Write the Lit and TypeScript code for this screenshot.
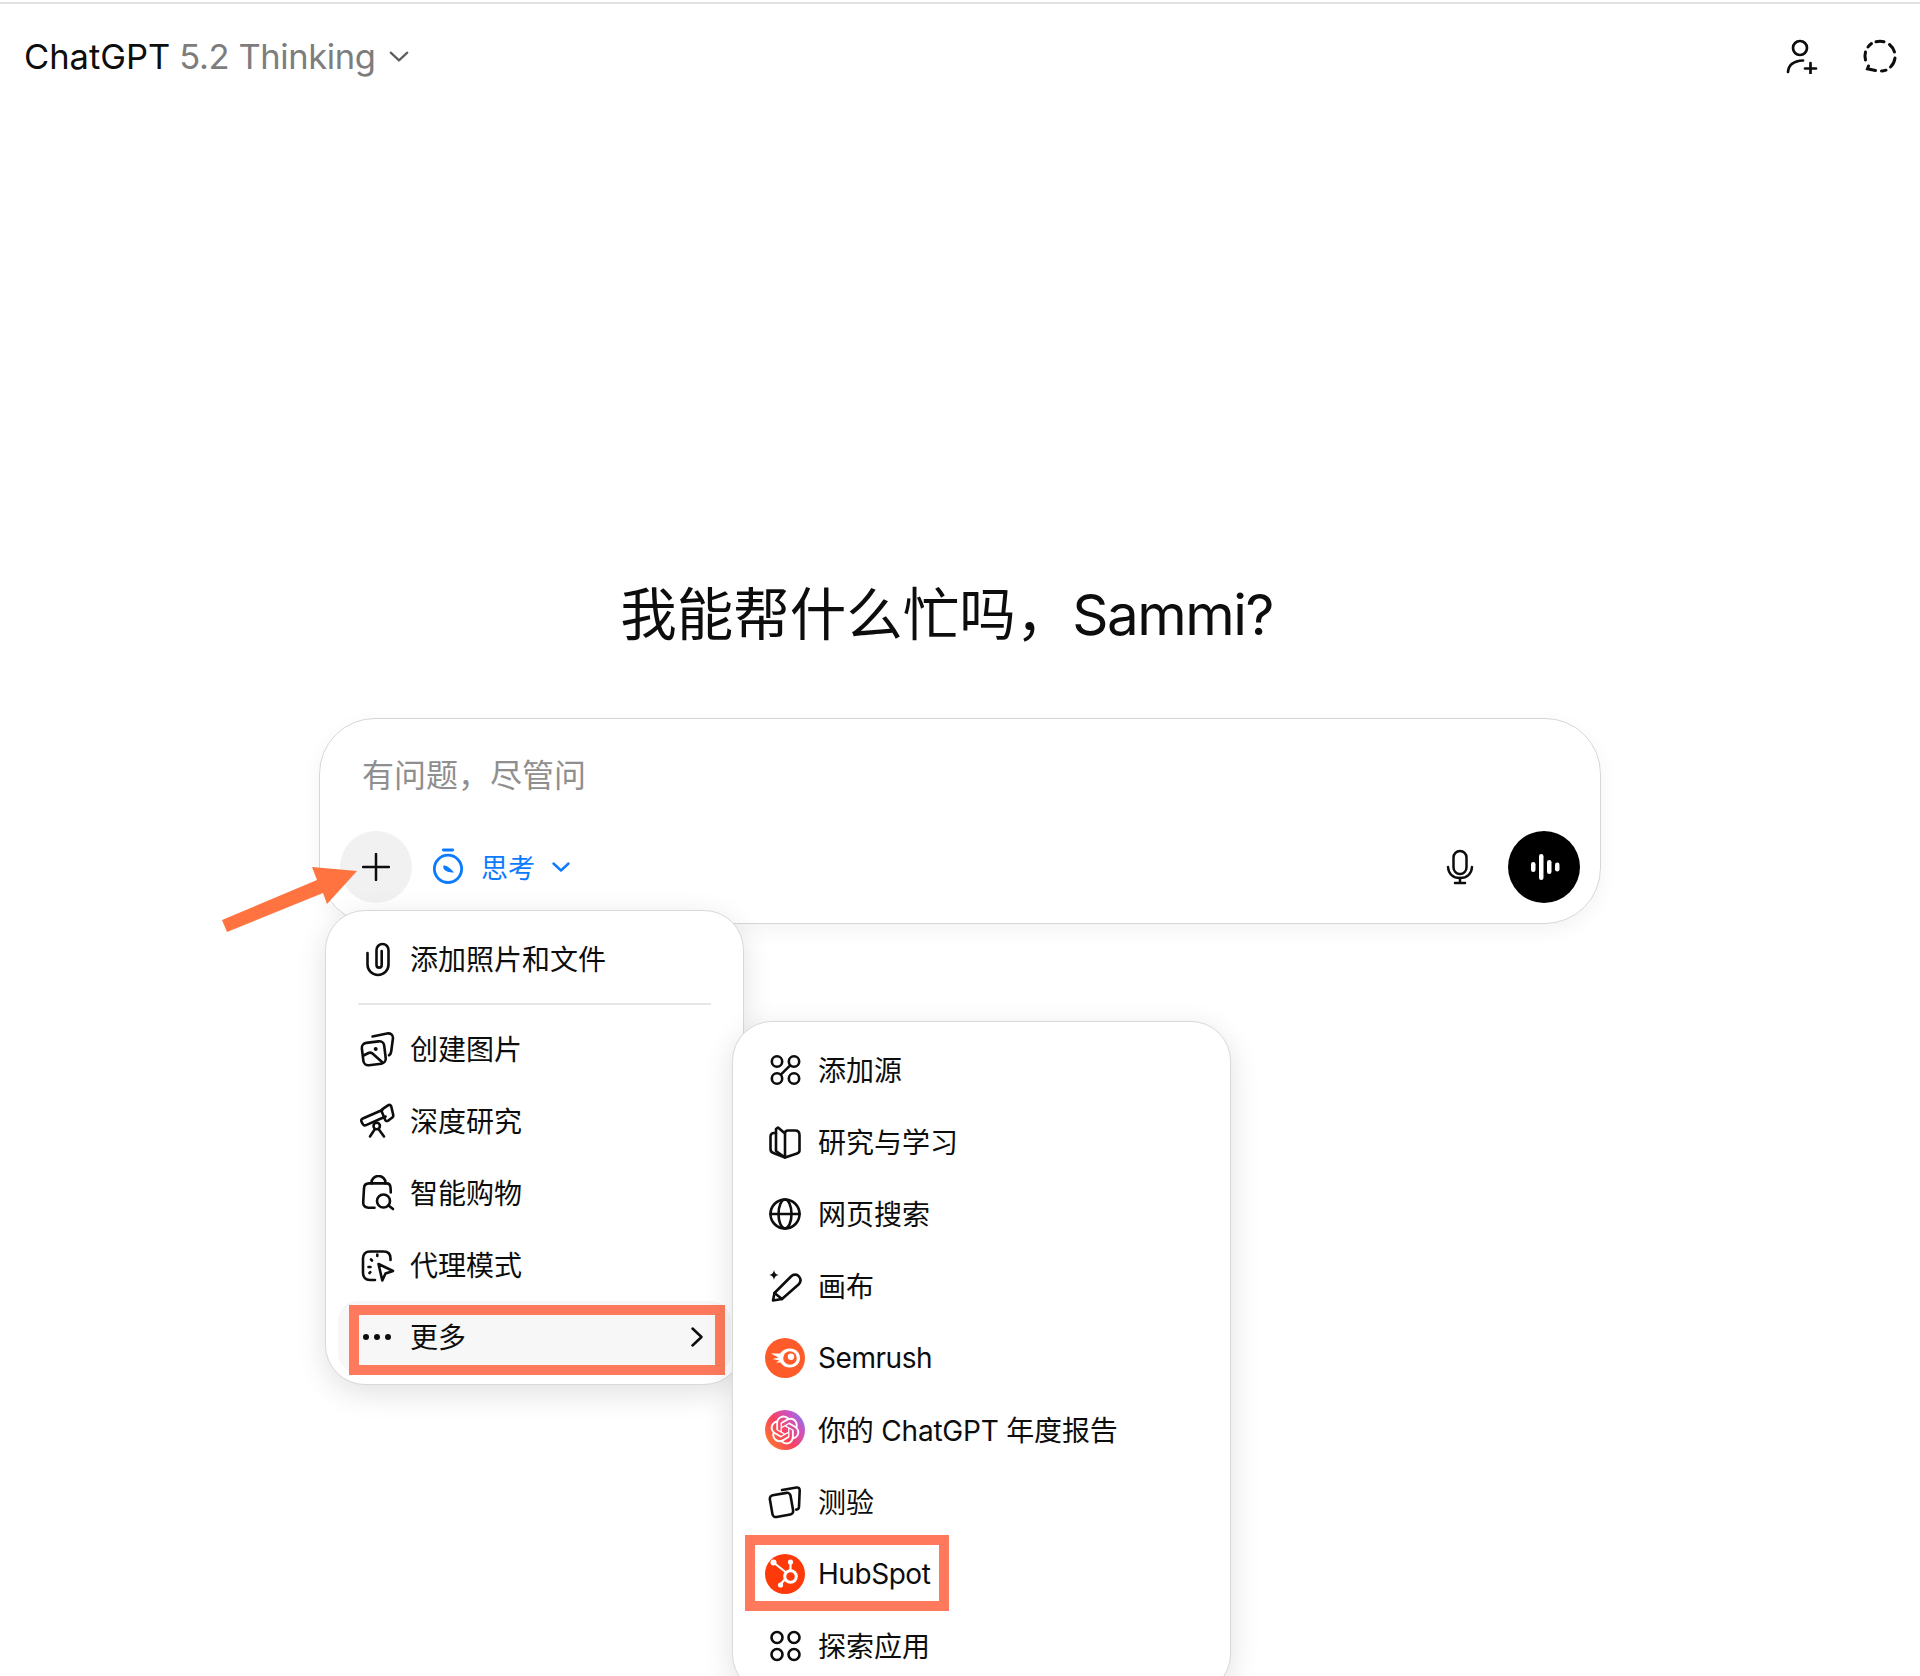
import { LitElement, css, html, svg } from "lit";
import { customElement } from "lit/decorators.js";

const line = (content: unknown, w = 2.6) => html`<svg
  class="icon"
  viewBox="0 0 36 36"
  fill="none"
  stroke="currentColor"
  stroke-width=${w}
  stroke-linecap="round"
  stroke-linejoin="round"
>
  ${content}
</svg>`;

const icons = {
  clip: line(svg`<path d="M8.500 12v11.500a10.500 10.500 0 0 0 21 0V9a6 6 0 0 0-12 0v15a2.600 2.600 0 0 0 5.200 0V10"/>`),
  image: line(svg`
    <path d="M13.500 5.500L28 2.500c3.500-.6 6 1.200 6 4.500l-1.800 13.500c-.3 2-1 3.200-2.200 3.700"/>
    <rect x="3.500" y="11" width="22.500" height="22.500" rx="5" transform="rotate(-7 15 22)"/>
    <circle cx="16.700" cy="18" r="2" fill="currentColor" stroke="none"/>
    <path d="M4.500 24.500l5-2.500c1.500-.7 2.700-.5 4 .6l9.500 8.400"/>
  `),
  telescope: line(svg`
    <path d="M23.300 7L3.800 15.500c-1.500.7-2 2-1.200 3.400l1 1.900c.7 1.500 2 2 3.500 1.300l19.500-8.600"/>
    <path d="M23.800 5.800L29 2.300c1.500-.9 2.600-.4 3.200 1l2 8.500c.3 1.400 0 2.300-1.200 3l-4 2.900c-1.300.7-2.300.3-2.900-1l-3.300-8c-.5-1.200-.2-2.100 1-2.900z"/>
    <circle cx="17.700" cy="23" r="3.200"/>
    <path d="M15.800 26.300L11 33.500M19.700 26.300L25 33.500"/>
  `),
  bag: line(svg`
    <path d="M12.500 8.500V7.500a6.500 6 0 0 1 14 0v1"/>
    <path d="M15.500 32.700H9.500c-3.300 0-5.500-2-5.300-5.300l.8-14c.1-3 2-5 5-5h17.500c2.500 0 3.800 1.500 4 4l.3 5"/>
    <circle cx="24.500" cy="26" r="6.500"/>
    <path d="M29.500 30.500l4.500 3.500"/>
  `),
  agent: line(svg`
    <path d="M16 33H11c-4.500 0-7-2.500-7-7V11.500c0-4.500 2.500-7 7-7h13.500c4.500 0 7 2.500 7 7V13"/>
    <path d="M19.500 17l14.500 7-7.500 2.500-3.200 7z"/>
    <path d="M18.300 7.500v1.500M12 12.500l1 1M9.500 20h2M10.500 26l.8-.8"/>
  `),
  dots: html`<svg class="icon" viewBox="0 0 36 36" fill="currentColor">
    <circle cx="7" cy="18" r="3" /><circle cx="18" cy="18" r="3" /><circle cx="29" cy="18" r="3" />
  </svg>`,
  sources: line(svg`
    <circle cx="10" cy="9.500" r="5.200"/><circle cx="27" cy="9.500" r="5.200"/>
    <circle cx="10" cy="26.500" r="5.200"/><circle cx="27" cy="26.500" r="5.200"/>
    <path d="M13.800 22.700L23.200 13.300"/>
  `),
  book: line(svg`
    <path d="M18 9.500L11 3.500 9 5v22l9 6.500 12-4c1.500-.5 2.500-1.500 2.500-3V11c0-3-1.500-4.500-4.500-4.500L21 6.500c-2 0-3 1.200-3 3v24"/>
    <path d="M9 9H7c-2 0-3.500 1.500-3.500 3.500V25c0 2 1 3.500 3 4l11.500 4.500"/>
  `),
  globe: line(svg`
    <circle cx="18" cy="18" r="14.500"/>
    <ellipse cx="18" cy="18" rx="6.500" ry="14.500"/>
    <path d="M3.500 18h29"/>
  `),
  pen: line(svg`
    <path d="M6 32.500l1.500-7.500L24 8.500c2.500-2.500 6-2.500 8 0s2 5.500-.5 8L15 31z"/>
    <path d="M7.500 25l7.500 6"/>
    <path d="M7 2c.7 3.300 1.700 4.300 5 5-3.300.7-4.300 1.700-5 5-.7-3.300-1.700-4.300-5-5 3.300-.7 4.300-1.700 5-5z" fill="currentColor" stroke="none"/>
  `),
  quiz: line(svg`
    <path d="M15 6l14.500-2.500c2-.3 3.200.8 3.200 2.800l-.7 16.500c-.1 1.800-1 2.800-2.800 2.800"/>
    <rect x="4" y="10" width="21" height="22" rx="3.500" transform="rotate(-10 14 21)"/>
  `),
  apps: line(svg`
    <circle cx="10" cy="9.500" r="5.500"/><circle cx="27" cy="9.500" r="5.500"/>
    <circle cx="10" cy="26.500" r="5.500"/><circle cx="27" cy="26.500" r="5.500"/>
  `),
  semrush: html`<svg class="logo" viewBox="0 0 40 40">
    <circle cx="20" cy="20" r="20" fill="#ff5a2a" />
    <path
      fill="#fff"
      d="M6 15.500h9C17.500 12 21 10.500 25 10.500c5.800 0 10 4 10 9.500s-4.200 9.500-10 9.500c-4.500 0-7.500-2-9.500-5H11l3.500-2-7-1.500 6-1.500z"
    />
    <circle cx="25" cy="20" r="6.800" fill="#ff5a2a" />
    <circle cx="26" cy="18.700" r="3.200" fill="#fff" />
  </svg>`,
  report: html`<svg class="logo" viewBox="0 0 40 40">
    <defs>
      <linearGradient id="rg" x1="0" y1="1" x2="1" y2="0.25">
        <stop offset="0" stop-color="#ff8a1e" />
        <stop offset="0.5" stop-color="#f8415f" />
        <stop offset="0.85" stop-color="#c855c8" />
        <stop offset="1" stop-color="#7a7bf0" />
      </linearGradient>
    </defs>
    <circle cx="20" cy="20" r="20" fill="url(#rg)" />
    <g transform="translate(5.600 5.600) scale(1.2)">
      <path
        fill="#fff"
        d="M22.2819 9.8211a5.9847 5.9847 0 0 0-.5157-4.9108 6.0462 6.0462 0 0 0-6.5098-2.9A6.0651 6.0651 0 0 0 4.9807 4.1818a5.9847 5.9847 0 0 0-3.9977 2.9 6.0462 6.0462 0 0 0 .7427 7.0966 5.98 5.98 0 0 0 .511 4.9107 6.051 6.051 0 0 0 6.5146 2.9001A5.9847 5.9847 0 0 0 13.2599 24a6.0557 6.0557 0 0 0 5.7718-4.2058 5.9894 5.9894 0 0 0 3.9977-2.9001 6.0557 6.0557 0 0 0-.7475-7.0729zm-9.022 12.6081a4.4755 4.4755 0 0 1-2.8764-1.0408l.1419-.0804 4.7783-2.7582a.7948.7948 0 0 0 .3927-.6813v-6.7369l2.02 1.1686a.071.071 0 0 1 .038.052v5.5826a4.504 4.504 0 0 1-4.4945 4.4944zm-9.6607-4.1254a4.4708 4.4708 0 0 1-.5346-3.0137l.142.0852 4.783 2.7582a.7712.7712 0 0 0 .7806 0l5.8428-3.3685v2.3324a.0804.0804 0 0 1-.0332.0615L9.74 19.9502a4.4992 4.4992 0 0 1-6.1408-1.6464zM2.3408 7.8956a4.485 4.485 0 0 1 2.3655-1.9728V11.6a.7664.7664 0 0 0 .3879.6765l5.8144 3.3543-2.0201 1.1685a.0757.0757 0 0 1-.071 0l-4.8303-2.7865A4.504 4.504 0 0 1 2.3408 7.872zm16.5963 3.8558L13.1038 8.364 15.1192 7.2a.0757.0757 0 0 1 .071 0l4.8303 2.7913a4.4944 4.4944 0 0 1-.6765 8.1042v-5.6772a.79.79 0 0 0-.407-.667zm2.0107-3.0231l-.142-.0852-4.7735-2.7818a.7759.7759 0 0 0-.7854 0L9.409 9.2297V6.8974a.0662.0662 0 0 1 .0284-.0615l4.8303-2.7866a4.4992 4.4992 0 0 1 6.6802 4.66zM8.3065 12.863l-2.02-1.1638a.0804.0804 0 0 1-.038-.0567V6.0742a4.4992 4.4992 0 0 1 7.3757-3.4537l-.142.0805L8.704 5.459a.7948.7948 0 0 0-.3927.6813zm1.0976-2.3654l2.602-1.4998 2.6069 1.4998v2.9994l-2.5974 1.4997-2.6067-1.4997Z"
      />
    </g>
  </svg>`,
  hubspot: html`<svg class="logo" viewBox="0 0 40 40">
    <circle cx="20" cy="20" r="20" fill="#ff3a0a" />
    <g stroke="#fff" stroke-width="2.200" fill="none" stroke-linecap="round">
      <path d="M8.500 8.500l12 9.500M25.500 9v8M20.500 24.500l-5 6" />
      <circle cx="25.500" cy="22.500" r="5.800" stroke-width="3" />
    </g>
    <circle cx="8.500" cy="8.500" r="3" fill="#fff" />
    <circle cx="25.500" cy="8" r="2.600" fill="#fff" />
    <circle cx="15.500" cy="31" r="2.600" fill="#fff" />
  </svg>`,
};

type Row = { icon: unknown; label: string; text?: string; mark?: boolean };

const sideItems: Row[] = [
  { icon: icons.sources, label: "添加源" },
  { icon: icons.book, label: "研究与学习" },
  { icon: icons.globe, label: "网页搜索" },
  { icon: icons.pen, label: "画布" },
  { icon: icons.semrush, label: "Semrush", text: "latin" },
  { icon: icons.report, label: "你的 ChatGPT 年度报告", text: "cjk mixed" },
  { icon: icons.quiz, label: "测验" },
  { icon: icons.hubspot, label: "HubSpot", text: "latin", mark: true },
  { icon: icons.apps, label: "探索应用" },
];

@customElement("app-root")
export class AppRoot extends LitElement {
  row(item: Row) {
    return html`<div class="row">
      ${item.icon}<span class=${item.text ?? "cjk"}>${item.label}</span>
      ${item.mark ? html`<div class="mark mark-hub"></div>` : null}
    </div>`;
  }

  render() {
    return html`
      <header>
        <div class="title">
          ChatGPT <span class="muted">5.2 Thinking</span>
          <svg class="chev" viewBox="0 0 18 10" fill="none" stroke="currentColor" stroke-width="2" stroke-linecap="round" stroke-linejoin="round">
            <path d="M1.500 1.500L9 8.500l7.500-7" />
          </svg>
        </div>
        <div class="top-actions">
          <svg class="top-icon" viewBox="0 0 36 36" fill="none" stroke="currentColor" stroke-width="2.700" stroke-linecap="round">
            <circle cx="16" cy="10" r="7" />
            <path d="M4 34c.5-7 5-11 15-11.500" />
            <path d="M26.500 25v11M21 30.500h11" />
          </svg>
          <svg class="top-icon" viewBox="0 0 36 36" fill="none" stroke="currentColor" stroke-width="3" stroke-linecap="round">
            <path d="M14 3.800A15 15 0 0 1 22 3.800" />
            <path d="M27.500 6.500A15 15 0 0 1 32.500 14" />
            <path d="M33 20A15 15 0 0 1 28.500 29" />
            <path d="M24 32.200A15 15 0 0 1 19.500 33" />
            <path d="M13.500 32.500L5.500 30.800 6.500 28" />
            <path d="M3.500 22A15 15 0 0 1 3.500 14" />
            <path d="M6 9A15 15 0 0 1 9.500 5.500" />
          </svg>
        </div>
      </header>

      <main>
        <h1>我能帮什么忙吗，<span class="name">Sammi?</span></h1>
        <div class="composer">
          <div class="placeholder">有问题，尽管问</div>
          <div class="toolbar">
            <div class="plus">
              <svg viewBox="0 0 28 28" fill="none" stroke="currentColor" stroke-width="2.500" stroke-linecap="round">
                <path d="M14 1v26M1 14h26" />
              </svg>
            </div>
            <div class="mode">
              <svg class="timer" viewBox="0 0 34 38" fill="none" stroke="currentColor" stroke-width="3" stroke-linecap="round">
                <path d="M12 2h10" />
                <circle cx="17" cy="22" r="14.500" />
                <path d="M12 18.500c3-1 8 3 11.500 7.500-5.500 0-10.500-2-11.500-5z" fill="currentColor" stroke="none" />
              </svg>
              <span class="cjk">思考</span>
              <svg class="chev" viewBox="0 0 18 10" fill="none" stroke="currentColor" stroke-width="2.400" stroke-linecap="round" stroke-linejoin="round">
                <path d="M1.500 1.500L9 8.500l7.500-7" />
              </svg>
            </div>
            <div class="spacer"></div>
            <svg class="mic" viewBox="0 0 36 36" fill="none" stroke="currentColor" stroke-width="2.500" stroke-linecap="round">
              <rect x="11.500" y="2" width="13" height="23" rx="6.500" />
              <path d="M6 18c.5 7 5 11 12 11s11.500-4 12-11" />
              <path d="M18 29v4M13 34h10" />
            </svg>
            <div class="voice">
              <svg viewBox="0 0 32 32" fill="#fff">
                <rect x="3" y="11" width="4.500" height="10" rx="2.250" />
                <rect x="11" y="3" width="4.500" height="26" rx="2.250" />
                <rect x="19" y="9" width="4.500" height="14" rx="2.250" />
                <rect x="27" y="11.500" width="4.500" height="9" rx="2.250" />
              </svg>
            </div>
          </div>

          <div class="menu menu-main">
            ${this.row({ icon: icons.clip, label: "添加照片和文件" })}
            <div class="divider"></div>
            ${this.row({ icon: icons.image, label: "创建图片" })}
            ${this.row({ icon: icons.telescope, label: "深度研究" })}
            ${this.row({ icon: icons.bag, label: "智能购物" })}
            ${this.row({ icon: icons.agent, label: "代理模式" })}
            <div class="row active">
              ${icons.dots}<span class="cjk">更多</span>
              <svg class="next" viewBox="0 0 12 20" fill="none" stroke="currentColor" stroke-width="2.500" stroke-linecap="round" stroke-linejoin="round">
                <path d="M1.500 1.500L10.500 10l-9 8.500" />
              </svg>
              <div class="mark mark-more"></div>
            </div>
          </div>
          <div class="menu menu-side">${sideItems.map((item) => this.row(item))}</div>
        </div>
      </main>

      <svg class="arrow" viewBox="0 0 400 1000">
        <polygon fill="#ff7340" points="222,920 317,880 312,867 357,871 327,904 323,893 227,932" />
      </svg>
    `;
  }

  static styles = css`
    :host {
      display: block;
      position: relative;
      height: 1676px;
      overflow: hidden;
      background: #fff;
      color: #0d0d0d;
      font-family: Inter, "Noto Sans CJK SC", sans-serif;
    }

    header {
      margin-top: 2px;
      border-top: 2px solid #e2e2e2;
      height: 104px;
      padding: 0 22px 0 24px;
      display: flex;
      align-items: center;
      justify-content: space-between;
    }
    .title {
      display: flex;
      align-items: center;
      gap: 9px;
      font-size: 34.500px;
    }
    .muted {
      color: #7d7d7d;
      letter-spacing: -0.400px;
    }
    .title .chev {
      width: 20px;
      height: 11px;
      margin-left: 5px;
      color: #5d5d5d;
    }
    .top-actions {
      display: flex;
      gap: 42px;
    }
    .top-icon {
      width: 36px;
      height: 36px;
      display: block;
    }

    main {
      padding-top: 475px;
      display: flex;
      flex-direction: column;
      align-items: center;
    }
    h1 {
      margin: 0 27px 71px 0;
      font-size: 56.500px;
      line-height: 64px;
      font-weight: 400;
    }
    .name {
      letter-spacing: -1.500px;
    }

    .composer {
      position: relative;
      box-sizing: border-box;
      width: 1282px;
      height: 206px;
      border: 1px solid #d6d6d6;
      border-radius: 56px;
      box-shadow: 0 6px 20px rgba(0, 0, 0, 0.05);
      padding: 37px 20px 20px 20px;
      display: flex;
      flex-direction: column;
      justify-content: space-between;
    }
    .placeholder {
      margin-left: 22px;
      font-size: 32px;
      line-height: 40px;
      color: #8f8f8f;
    }
    .toolbar {
      display: flex;
      align-items: center;
    }
    .plus {
      width: 72px;
      height: 72px;
      border-radius: 50%;
      background: #f1f1f1;
      display: flex;
      align-items: center;
      justify-content: center;
    }
    .plus svg {
      width: 28px;
      height: 28px;
    }
    .mode {
      display: flex;
      align-items: center;
      gap: 17px;
      margin-left: 20px;
      color: #0d7bff;
      font-size: 27px;
    }
    .timer {
      width: 32px;
      height: 36px;
      margin-top: -3px;
    }
    .mode .chev {
      width: 18px;
      height: 10px;
    }
    .spacer {
      flex: 1;
    }
    .mic {
      width: 36px;
      height: 36px;
      margin-right: 30px;
    }
    .voice {
      width: 72px;
      height: 72px;
      border-radius: 50%;
      background: #000;
      display: flex;
      align-items: center;
      justify-content: center;
    }
    .voice svg {
      width: 32px;
      height: 32px;
    }

    .menu {
      position: absolute;
      box-sizing: border-box;
      background: #fff;
      border: 1px solid #d9d9d9;
      border-radius: 40px;
      box-shadow: 0 8px 30px rgba(0, 0, 0, 0.12);
      padding: 12px 12px 11px;
    }
    .menu-main {
      left: 5px;
      top: 191px;
      width: 419px;
      padding-left: 12px;
    }
    .menu-main .row {
      padding-left: 21px;
    }
    .menu-side {
      left: 412px;
      top: 302px;
      width: 499px;
    }
    .divider {
      height: 2px;
      margin: 8px 20px;
      background: #e6e6e6;
    }
    .row {
      position: relative;
      height: 72px;
      padding-left: 22px;
      display: flex;
      align-items: center;
      gap: 15px;
      border-radius: 20px;
      font-size: 28px;
    }
    .row.active {
      background: #f7f7f7;
    }
    .cjk {
      margin-top: -2px;
    }
    .latin {
      letter-spacing: -0.450px;
    }
    .mixed {
      letter-spacing: -0.200px;
    }
    .icon {
      width: 36px;
      height: 36px;
      flex: none;
    }
    .logo {
      width: 40px;
      height: 40px;
      flex: none;
      margin: 0 -2px;
    }
    .next {
      position: absolute;
      right: 28px;
      width: 12px;
      height: 20px;
    }
    .mark {
      position: absolute;
      box-sizing: border-box;
      border: 10px solid #ff7a5c;
    }
    .mark-more {
      left: 11px;
      top: 4px;
      width: 376px;
      height: 70px;
    }
    .mark-hub {
      left: 0;
      top: -3px;
      width: 204px;
      height: 76px;
    }

    .arrow {
      position: absolute;
      left: 0;
      top: 0;
      width: 400px;
      height: 1000px;
      pointer-events: none;
    }
  `;
}

declare global {
  interface HTMLElementTagNameMap {
    "app-root": AppRoot;
  }
}
